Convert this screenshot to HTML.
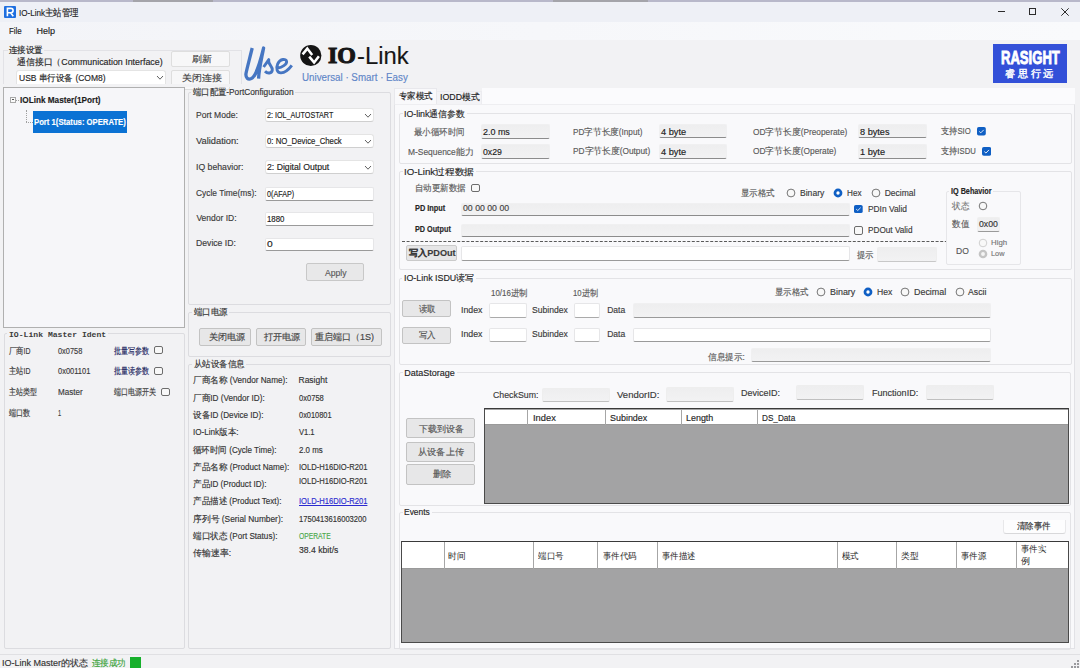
<!DOCTYPE html><html><head><meta charset="utf-8"><style>
html,body{margin:0;padding:0;width:1080px;height:668px;overflow:hidden;background:#f2f2f4;font-family:'Liberation Sans', sans-serif;}
.a{position:absolute;}
.t{position:absolute;white-space:nowrap;font-weight:500;-webkit-text-stroke:0.15px currentColor;}
</style></head><body>
<div class="a" style="left:0px;top:0px;width:1080.00px;height:22.00px;background:#eef0f6;"></div>
<div class="a" style="left:0px;top:0px;width:1080.00px;height:1.50px;background:#b8b8ca;"></div>
<div class="a" style="left:133px;top:0px;width:80.00px;height:1.50px;background:#a4a4aa;"></div>
<div class="a" style="left:553px;top:0px;width:95.00px;height:1.50px;background:#a4a4aa;"></div>
<div class="a" style="left:0px;top:22px;width:1080.00px;height:18.00px;background:linear-gradient(90deg,#f3f4f8,#f9fafc);"></div>
<svg class="a" style="left:4px;top:6px" width="12" height="12"><rect width="12" height="12" rx="1" fill="#1f6fe0"/><path d="M3.4 10.2 V2.4 H6.8 Q9.1 2.4 9.1 4.6 Q9.1 6.7 6.8 6.7 H3.4 M6.6 6.7 L9.3 10.2" fill="none" stroke="#fff" stroke-width="1.6"/></svg>
<div class="t" style="left:18.70px;top:5.50px;color:#1c1c1c;font-family:'Liberation Sans', sans-serif;font-size:9.5px;line-height:14px;transform:scaleX(0.8481);transform-origin:0 50%;">IO-Link主站管理</div>
<div class="a" style="left:998px;top:11px;width:7.00px;height:1.00px;background:#2c2c2c;"></div>
<div class="a" style="left:1029px;top:8px;width:7.00px;height:7.00px;border:1px solid #2c2c2c;box-sizing:border-box;"></div>
<svg class="a" style="left:1060.5px;top:7.5px" width="8" height="8"><path d="M0.3 0.3 L7.7 7.7 M7.7 0.3 L0.3 7.7" stroke="#2c2c2c" stroke-width="1"/></svg>
<div class="t" style="left:9.20px;top:24.20px;color:#1c1c1c;font-family:'Liberation Sans', sans-serif;font-size:9px;line-height:14px;transform:scaleX(0.8818);transform-origin:0 50%;">File</div>
<div class="t" style="left:36.40px;top:24.20px;color:#1c1c1c;font-family:'Liberation Sans', sans-serif;font-size:9px;line-height:14px;">Help</div>
<div class="a" style="left:3px;top:50px;width:239.00px;height:34.00px;border:1px solid #e2e2e6;border-bottom:none;box-sizing:border-box;"></div>
<div class="a" style="left:8px;top:46px;width:36.00px;height:8.00px;background:#f2f2f4;"></div>
<div class="t" style="left:8.90px;top:43.40px;color:#262626;font-family:'Liberation Sans', sans-serif;font-size:9px;line-height:14px;transform:scaleX(0.9417);transform-origin:0 50%;">连接设置</div>
<div class="t" style="left:17.20px;top:55.00px;color:#262626;font-family:'Liberation Sans', sans-serif;font-size:9px;line-height:14px;transform:scaleX(0.9835);transform-origin:0 50%;">通信接口（Communication Interface)</div>
<div class="a" style="left:16.3px;top:69.7px;width:150.00px;height:20.30px;background:#ffffff;border:1px solid #e4e4e4;border-bottom:1px solid #cfcfcf;border-radius:3px;box-sizing:border-box;"></div>
<svg class="a" style="left:155.8px;top:75.4px" width="8" height="5"><path d="M1 1 L4.00 4.20 L7.00 1" fill="none" stroke="#606060" stroke-width="1"/></svg>
<div class="t" style="left:18.90px;top:71.30px;color:#262626;font-family:'Liberation Sans', sans-serif;font-size:9px;line-height:14px;transform:scaleX(0.9474);transform-origin:0 50%;">USB 串行设备 (COM8)</div>
<div class="a" style="left:171.3px;top:50.7px;width:59.00px;height:16.60px;background:#f7f7f8;border:1px solid #dedede;border-radius:2px;box-sizing:border-box;"></div>
<div class="t" style="left:192.20px;top:51.50px;color:#444;font-family:'Liberation Sans', sans-serif;font-size:9px;line-height:14px;transform:scaleX(1.1000);transform-origin:0 50%;">刷新</div>
<div class="a" style="left:171.3px;top:70.2px;width:59.00px;height:19.80px;background:#f7f7f8;border:1px solid #dedede;border-radius:2px;box-sizing:border-box;"></div>
<div class="t" style="left:182.20px;top:70.70px;color:#444;font-family:'Liberation Sans', sans-serif;font-size:9px;line-height:14px;transform:scaleX(1.1056);transform-origin:0 50%;">关闭连接</div>
<div class="a" style="left:0px;top:84px;width:242.00px;height:3.00px;background:#f2f2f4;"></div>
<svg class="a" style="left:240px;top:42px" width="56" height="42"><g fill="none" stroke="#4676c2" stroke-linecap="butt" stroke-linejoin="round"><path d="M12.2 6 C9.8 16 6.8 27 6 31.5 C5.4 35.8 8 38 11.3 36.6 C16.5 34 20.2 20 23.6 6 C21.8 16 18.8 28 18.6 36.6" stroke-width="3.3"/><path d="M23.6 25 L28.8 17.6 C27.4 22 32.8 24 32.3 28 C31.8 31.6 27.6 32 25 29.3" stroke-width="2.9"/><path d="M37.4 26.2 C42 25.2 47 22.6 46.6 19.4 C46.1 16.4 40.2 16.6 37.7 21.8 C35.5 26.8 37.3 31 41 30.9 C45 30.7 49 27.2 51.8 23.4" stroke-width="2.9"/></g></svg>
<svg class="a" style="left:300px;top:44px" width="22" height="23"><circle cx="10.8" cy="11.5" r="10.6" fill="#141414"/><path d="M2.6 10.4 L7.3 4.6 L12.2 10.9" fill="none" stroke="#fff" stroke-width="2.5" stroke-linejoin="miter"/><path d="M9.2 12.6 L14.1 18.4 L18.9 12.2" fill="none" stroke="#fff" stroke-width="2.5" stroke-linejoin="miter"/></svg>
<div class="t" style="left:328.20px;top:43.00px;color:#161616;font-family:'Liberation Serif', serif;font-size:23px;line-height:26px;font-weight:bold;-webkit-text-stroke:1.1px #161616;transform:scaleX(1.0393);transform-origin:0 50%;">IO</div>
<div class="t" style="left:356.70px;top:43.00px;color:#161616;font-family:'Liberation Sans', sans-serif;font-size:23px;line-height:26px;transform:scaleX(1.0349);transform-origin:0 50%;">-Link</div>
<div class="t" style="left:301.70px;top:71.20px;color:#5f86c8;font-family:'Liberation Sans', sans-serif;font-size:10px;line-height:14px;transform:scaleX(0.9764);transform-origin:0 50%;">Universal · Smart · Easy</div>
<div class="a" style="left:992.9px;top:44px;width:74.10px;height:38.60px;background:#3350d8;"></div>
<div class="t" style="left:1000.60px;top:47.80px;color:#fff;font-family:'Liberation Sans', sans-serif;font-size:19px;line-height:20px;font-weight:bold;-webkit-text-stroke:0.9px #fff;transform:scaleX(0.6877);transform-origin:0 50%;">RASIGHT</div>
<div class="t" style="left:1004.70px;top:67.80px;color:#fff;font-family:'Liberation Sans', sans-serif;font-size:9.5px;line-height:12px;-webkit-text-stroke:0.4px #fff;transform:scaleX(1.0121);transform-origin:0 50%;">睿 思 行 远</div>
<div class="a" style="left:3px;top:87px;width:182.00px;height:241.00px;background:#f6f6f9;border:1px solid #b0b0b0;box-sizing:border-box;"></div>
<div class="a" style="left:10px;top:96.6px;width:6.20px;height:6.40px;border:1px solid #a8a8a8;background:#fafafa;box-sizing:border-box;"></div>
<div class="a" style="left:11.8px;top:99.4px;width:2.60px;height:0.90px;background:#555;"></div>
<div class="a" style="left:16.2px;top:99.6px;width:2.80px;height:0.80px;border-top:1px dotted #a0a0a0;"></div>
<div class="t" style="left:20.30px;top:92.50px;color:#1c1c1c;font-family:'Liberation Sans', sans-serif;font-size:9px;line-height:14px;font-weight:bold;transform:scaleX(0.9106);transform-origin:0 50%;">IOLink Master(1Port)</div>
<div class="a" style="left:26px;top:110.4px;width:1.00px;height:11.90px;border-left:1px dotted #a0a0a0;"></div>
<div class="a" style="left:26px;top:122px;width:6.75px;height:1.00px;border-top:1px dotted #a0a0a0;"></div>
<div class="a" style="left:32.75px;top:110.75px;width:94.50px;height:22.15px;background:#0b72d4;"></div>
<div class="t" style="left:34.10px;top:115.00px;color:#fff;font-family:'Liberation Sans', sans-serif;font-size:9px;line-height:14px;font-weight:bold;transform:scaleX(0.8552);transform-origin:0 50%;">Port 1(Status: OPERATE)</div>
<div class="a" style="left:4.2px;top:333.3px;width:180.80px;height:316.20px;border:1px solid #dcdce0;box-sizing:border-box;border-radius:2px;"></div>
<div class="a" style="left:7.199999999999999px;top:332.5px;width:100.60px;height:4.00px;background:#f2f2f4;"></div>
<div class="t" style="left:8.90px;top:327.50px;color:#3c3c3c;font-family:'Liberation Mono', monospace;font-size:8px;line-height:14px;font-weight:bold;-webkit-text-stroke:0;transform:scaleX(1.0123);transform-origin:0 50%;">IO-Link Master Ident</div>
<div class="t" style="left:8.90px;top:343.70px;color:#3a3a3a;font-family:'Liberation Sans', sans-serif;font-size:8.5px;line-height:14px;transform:scaleX(0.8075);transform-origin:0 50%;">厂商ID</div>
<div class="t" style="left:57.70px;top:343.70px;color:#3a3a3a;font-family:'Liberation Sans', sans-serif;font-size:8.5px;line-height:14px;transform:scaleX(0.8713);transform-origin:0 50%;">0x0758</div>
<div class="t" style="left:113.90px;top:343.70px;color:#1a1f5e;font-family:'Liberation Sans', sans-serif;font-size:8.5px;line-height:14px;transform:scaleX(0.7822);transform-origin:0 50%;">批量写参数</div>
<div class="a" style="left:154.2px;top:345.7px;width:9.10px;height:8.80px;border:1px solid #6c6c6c;border-radius:2px;box-sizing:border-box;background:#f8f8f8;"></div>
<div class="t" style="left:8.90px;top:364.20px;color:#3a3a3a;font-family:'Liberation Sans', sans-serif;font-size:8.5px;line-height:14px;transform:scaleX(0.8075);transform-origin:0 50%;">主站ID</div>
<div class="t" style="left:57.70px;top:364.20px;color:#3a3a3a;font-family:'Liberation Sans', sans-serif;font-size:8.5px;line-height:14px;transform:scaleX(0.8797);transform-origin:0 50%;">0x001101</div>
<div class="t" style="left:113.90px;top:364.20px;color:#1a1f5e;font-family:'Liberation Sans', sans-serif;font-size:8.5px;line-height:14px;transform:scaleX(0.7822);transform-origin:0 50%;">批量读参数</div>
<div class="a" style="left:154.2px;top:366.7px;width:9.10px;height:8.30px;border:1px solid #6c6c6c;border-radius:2px;box-sizing:border-box;background:#f8f8f8;"></div>
<div class="t" style="left:8.90px;top:385.30px;color:#3a3a3a;font-family:'Liberation Sans', sans-serif;font-size:8.5px;line-height:14px;transform:scaleX(0.7806);transform-origin:0 50%;">主站类型</div>
<div class="t" style="left:57.70px;top:385.30px;color:#3a3a3a;font-family:'Liberation Sans', sans-serif;font-size:8.5px;line-height:14px;transform:scaleX(0.9467);transform-origin:0 50%;">Master</div>
<div class="t" style="left:113.90px;top:385.30px;color:#3a3a3a;font-family:'Liberation Sans', sans-serif;font-size:8.5px;line-height:14px;transform:scaleX(0.7815);transform-origin:0 50%;">端口电源开关</div>
<div class="a" style="left:161.3px;top:387.5px;width:9.00px;height:8.20px;border:1px solid #6c6c6c;border-radius:2px;box-sizing:border-box;background:#f8f8f8;"></div>
<div class="t" style="left:8.90px;top:405.80px;color:#3a3a3a;font-family:'Liberation Sans', sans-serif;font-size:8.5px;line-height:14px;transform:scaleX(0.7926);transform-origin:0 50%;">端口数</div>
<div class="t" style="left:57.70px;top:405.80px;color:#3a3a3a;font-family:'Liberation Sans', sans-serif;font-size:8.5px;line-height:14px;transform:scaleX(0.6548);transform-origin:0 50%;">1</div>
<div class="a" style="left:188px;top:92px;width:202.50px;height:212.50px;border:1px solid #dcdce0;box-sizing:border-box;border-radius:2px;"></div>
<div class="a" style="left:191.3px;top:89.8px;width:104.00px;height:4.00px;background:#f2f2f4;"></div>
<div class="t" style="left:193.00px;top:84.80px;color:#333;font-family:'Liberation Sans', sans-serif;font-size:9px;line-height:14px;transform:scaleX(0.9225);transform-origin:0 50%;">端口配置-PortConfiguration</div>
<div class="t" style="left:196.40px;top:108.00px;color:#3a3a3a;font-family:'Liberation Sans', sans-serif;font-size:8.5px;line-height:14px;transform:scaleX(1.0053);transform-origin:0 50%;">Port Mode:</div>
<div class="t" style="left:196.40px;top:133.70px;color:#3a3a3a;font-family:'Liberation Sans', sans-serif;font-size:8.5px;line-height:14px;transform:scaleX(1.0927);transform-origin:0 50%;">Validation:</div>
<div class="t" style="left:196.40px;top:159.70px;color:#3a3a3a;font-family:'Liberation Sans', sans-serif;font-size:8.5px;line-height:14px;transform:scaleX(1.0213);transform-origin:0 50%;">IQ behavior:</div>
<div class="t" style="left:196.40px;top:185.60px;color:#3a3a3a;font-family:'Liberation Sans', sans-serif;font-size:8.5px;line-height:14px;transform:scaleX(0.9871);transform-origin:0 50%;">Cycle Time(ms):</div>
<div class="t" style="left:196.40px;top:211.00px;color:#3a3a3a;font-family:'Liberation Sans', sans-serif;font-size:8.5px;line-height:14px;">Vendor ID:</div>
<div class="t" style="left:196.40px;top:236.30px;color:#3a3a3a;font-family:'Liberation Sans', sans-serif;font-size:8.5px;line-height:14px;transform:scaleX(1.0174);transform-origin:0 50%;">Device ID:</div>
<div class="a" style="left:265.3px;top:107.8px;width:109.20px;height:14.40px;background:#ffffff;border:1px solid #e4e4e4;border-bottom:1px solid #cfcfcf;border-radius:3px;box-sizing:border-box;"></div>
<svg class="a" style="left:364.0px;top:112.7px" width="8" height="5"><path d="M1 1 L4.00 4.20 L7.00 1" fill="none" stroke="#606060" stroke-width="1"/></svg>
<div class="t" style="left:267.20px;top:108.00px;color:#222;font-family:'Liberation Sans', sans-serif;font-size:8.5px;line-height:14px;transform:scaleX(0.8454);transform-origin:0 50%;">2: IOL_AUTOSTART</div>
<div class="a" style="left:265.3px;top:134.3px;width:109.20px;height:13.80px;background:#ffffff;border:1px solid #e4e4e4;border-bottom:1px solid #cfcfcf;border-radius:3px;box-sizing:border-box;"></div>
<svg class="a" style="left:364.0px;top:138.9px" width="8" height="5"><path d="M1 1 L4.00 4.20 L7.00 1" fill="none" stroke="#606060" stroke-width="1"/></svg>
<div class="t" style="left:267.20px;top:134.00px;color:#222;font-family:'Liberation Sans', sans-serif;font-size:8.5px;line-height:14px;transform:scaleX(0.9139);transform-origin:0 50%;">0: NO_Device_Check</div>
<div class="a" style="left:265.3px;top:160.2px;width:109.20px;height:14.20px;background:#ffffff;border:1px solid #e4e4e4;border-bottom:1px solid #cfcfcf;border-radius:3px;box-sizing:border-box;"></div>
<svg class="a" style="left:364.0px;top:165.0px" width="8" height="5"><path d="M1 1 L4.00 4.20 L7.00 1" fill="none" stroke="#606060" stroke-width="1"/></svg>
<div class="t" style="left:267.20px;top:160.30px;color:#222;font-family:'Liberation Sans', sans-serif;font-size:8.5px;line-height:14px;transform:scaleX(1.0205);transform-origin:0 50%;">2: Digital Output</div>
<div class="a" style="left:265.3px;top:187.4px;width:109.20px;height:13.90px;background:#ffffff;border:1px solid #e6e6e8;border-bottom:1px solid #9a9a9a;border-radius:2px;box-sizing:border-box;"></div>
<div class="t" style="left:266.60px;top:186.50px;color:#222;font-family:'Liberation Sans', sans-serif;font-size:8.5px;line-height:14px;transform:scaleX(0.8436);transform-origin:0 50%;">0(AFAP)</div>
<div class="a" style="left:265.3px;top:212.4px;width:109.20px;height:13.90px;background:#ffffff;border:1px solid #e6e6e8;border-bottom:1px solid #9a9a9a;border-radius:2px;box-sizing:border-box;"></div>
<div class="t" style="left:266.60px;top:211.70px;color:#222;font-family:'Liberation Sans', sans-serif;font-size:8.5px;line-height:14px;transform:scaleX(0.9249);transform-origin:0 50%;">1880</div>
<div class="a" style="left:265.3px;top:237.8px;width:109.20px;height:13.50px;background:#ffffff;border:1px solid #e6e6e8;border-bottom:1px solid #9a9a9a;border-radius:2px;box-sizing:border-box;"></div>
<div class="t" style="left:266.60px;top:237.40px;color:#222;font-family:'Liberation Sans', sans-serif;font-size:8.5px;line-height:14px;transform:scaleX(1.2040);transform-origin:0 50%;">0</div>
<div class="a" style="left:305.9px;top:262.9px;width:58.10px;height:18.30px;background:#e8e8e9;border:1px solid #c8c8c8;border-radius:2px;box-sizing:border-box;"></div>
<div class="t" style="left:325.30px;top:265.70px;color:#5a5a5a;font-family:'Liberation Sans', sans-serif;font-size:9px;line-height:14px;transform:scaleX(0.9593);transform-origin:0 50%;">Apply</div>
<div class="a" style="left:188px;top:312px;width:202.50px;height:45.00px;border:1px solid #dcdce0;box-sizing:border-box;border-radius:2px;"></div>
<div class="a" style="left:191.9px;top:310px;width:37.30px;height:4.00px;background:#f2f2f4;"></div>
<div class="t" style="left:193.60px;top:305.00px;color:#333;font-family:'Liberation Sans', sans-serif;font-size:9px;line-height:14px;transform:scaleX(0.9417);transform-origin:0 50%;">端口电源</div>
<div class="a" style="left:199.2px;top:327.5px;width:51.50px;height:18.00px;background:#e7e7e8;border:1px solid #c3c3c3;border-radius:2px;box-sizing:border-box;"></div>
<div class="t" style="left:208.50px;top:329.60px;color:#444;font-family:'Liberation Sans', sans-serif;font-size:9px;line-height:14px;transform:scaleX(1.0139);transform-origin:0 50%;">关闭电源</div>
<div class="a" style="left:255.5px;top:327.5px;width:50.70px;height:18.00px;background:#e7e7e8;border:1px solid #c3c3c3;border-radius:2px;box-sizing:border-box;"></div>
<div class="t" style="left:263.50px;top:329.60px;color:#444;font-family:'Liberation Sans', sans-serif;font-size:9px;line-height:14px;transform:scaleX(1.0167);transform-origin:0 50%;">打开电源</div>
<div class="a" style="left:310.5px;top:327.5px;width:71.40px;height:18.00px;background:#e7e7e8;border:1px solid #c3c3c3;border-radius:2px;box-sizing:border-box;"></div>
<div class="t" style="left:315.00px;top:329.60px;color:#444;font-family:'Liberation Sans', sans-serif;font-size:9px;line-height:14px;">重启端口（1S)</div>
<div class="a" style="left:188px;top:364.2px;width:202.50px;height:284.80px;border:1px solid #dcdce0;box-sizing:border-box;border-radius:2px;"></div>
<div class="a" style="left:191.9px;top:362.2px;width:54.30px;height:4.00px;background:#f2f2f4;"></div>
<div class="t" style="left:193.60px;top:357.20px;color:#333;font-family:'Liberation Sans', sans-serif;font-size:9px;line-height:14px;transform:scaleX(0.9426);transform-origin:0 50%;">从站设备信息</div>
<div class="t" style="left:193.40px;top:373.20px;color:#333;font-family:'Liberation Sans', sans-serif;font-size:8.5px;line-height:14px;transform:scaleX(0.9606);transform-origin:0 50%;">厂商名称 (Vendor Name):</div>
<div class="t" style="left:298.50px;top:373.20px;color:#333;font-family:'Liberation Sans', sans-serif;font-size:8.5px;line-height:14px;">Rasight</div>
<div class="t" style="left:193.40px;top:390.70px;color:#333;font-family:'Liberation Sans', sans-serif;font-size:8.5px;line-height:14px;transform:scaleX(0.9600);transform-origin:0 50%;">厂商ID (Vendor ID):</div>
<div class="t" style="left:298.50px;top:390.70px;color:#333;font-family:'Liberation Sans', sans-serif;font-size:8.5px;line-height:14px;transform:scaleX(0.8892);transform-origin:0 50%;">0x0758</div>
<div class="t" style="left:193.40px;top:408.00px;color:#333;font-family:'Liberation Sans', sans-serif;font-size:8.5px;line-height:14px;transform:scaleX(0.9548);transform-origin:0 50%;">设备ID (Device ID):</div>
<div class="t" style="left:298.50px;top:408.00px;color:#333;font-family:'Liberation Sans', sans-serif;font-size:8.5px;line-height:14px;transform:scaleX(0.8730);transform-origin:0 50%;">0x010801</div>
<div class="t" style="left:193.40px;top:424.70px;color:#333;font-family:'Liberation Sans', sans-serif;font-size:8.5px;line-height:14px;transform:scaleX(0.9547);transform-origin:0 50%;">IO-Link版本:</div>
<div class="t" style="left:298.50px;top:424.70px;color:#333;font-family:'Liberation Sans', sans-serif;font-size:8.5px;line-height:14px;transform:scaleX(0.8914);transform-origin:0 50%;">V1.1</div>
<div class="t" style="left:193.40px;top:442.70px;color:#333;font-family:'Liberation Sans', sans-serif;font-size:8.5px;line-height:14px;transform:scaleX(0.9443);transform-origin:0 50%;">循环时间 (Cycle Time):</div>
<div class="t" style="left:298.50px;top:442.70px;color:#333;font-family:'Liberation Sans', sans-serif;font-size:8.5px;line-height:14px;transform:scaleX(0.9288);transform-origin:0 50%;">2.0 ms</div>
<div class="t" style="left:193.40px;top:459.90px;color:#333;font-family:'Liberation Sans', sans-serif;font-size:8.5px;line-height:14px;transform:scaleX(0.9561);transform-origin:0 50%;">产品名称 (Product Name):</div>
<div class="t" style="left:298.50px;top:459.90px;color:#333;font-family:'Liberation Sans', sans-serif;font-size:8.5px;line-height:14px;transform:scaleX(0.8938);transform-origin:0 50%;">IOLD-H16DIO-R201</div>
<div class="t" style="left:193.40px;top:477.30px;color:#333;font-family:'Liberation Sans', sans-serif;font-size:8.5px;line-height:14px;transform:scaleX(0.9540);transform-origin:0 50%;">产品ID (Product ID):</div>
<div class="t" style="left:298.50px;top:474.00px;color:#333;font-family:'Liberation Sans', sans-serif;font-size:8.5px;line-height:14px;transform:scaleX(0.8938);transform-origin:0 50%;">IOLD-H16DIO-R201</div>
<div class="t" style="left:193.40px;top:494.40px;color:#333;font-family:'Liberation Sans', sans-serif;font-size:8.5px;line-height:14px;transform:scaleX(0.9467);transform-origin:0 50%;">产品描述 (Product Text):</div>
<div class="t" style="left:298.50px;top:494.40px;color:#2a2ad0;font-family:'Liberation Sans', sans-serif;font-size:8.5px;line-height:14px;transform:scaleX(0.8938);transform-origin:0 50%;"><u>IOLD-H16DIO-R201</u></div>
<div class="t" style="left:193.40px;top:512.00px;color:#333;font-family:'Liberation Sans', sans-serif;font-size:8.5px;line-height:14px;transform:scaleX(0.9813);transform-origin:0 50%;">序列号 (Serial Number):</div>
<div class="t" style="left:298.50px;top:512.00px;color:#333;font-family:'Liberation Sans', sans-serif;font-size:8.5px;line-height:14px;transform:scaleX(0.8924);transform-origin:0 50%;">1750413616003200</div>
<div class="t" style="left:193.40px;top:529.30px;color:#333;font-family:'Liberation Sans', sans-serif;font-size:8.5px;line-height:14px;transform:scaleX(0.9543);transform-origin:0 50%;">端口状态 (Port Status):</div>
<div class="t" style="left:298.50px;top:529.30px;color:#4aa84a;font-family:'Liberation Sans', sans-serif;font-size:8.5px;line-height:14px;transform:scaleX(0.7925);transform-origin:0 50%;">OPERATE</div>
<div class="t" style="left:193.40px;top:545.80px;color:#333;font-family:'Liberation Sans', sans-serif;font-size:8.5px;line-height:14px;transform:scaleX(0.9902);transform-origin:0 50%;">传输速率:</div>
<div class="t" style="left:298.50px;top:543.30px;color:#333;font-family:'Liberation Sans', sans-serif;font-size:8.5px;line-height:14px;transform:scaleX(1.0168);transform-origin:0 50%;">38.4 kbit/s</div>
<div class="a" style="left:393.7px;top:103.7px;width:681.30px;height:545.30px;background:#f9f9fb;border:1px solid #e2e2e6;border-top-color:#eeeef1;box-sizing:border-box;"></div>
<div class="a" style="left:482px;top:88px;width:593.00px;height:15.70px;background:#fbfbfd;"></div>
<div class="a" style="left:393.7px;top:88.2px;width:43.20px;height:16.30px;background:#f9f9fb;border:1px solid #e8e8ec;border-bottom:none;box-sizing:border-box;"></div>
<div class="t" style="left:398.90px;top:88.70px;color:#1c1c1c;font-family:'Liberation Sans', sans-serif;font-size:9px;line-height:14px;transform:scaleX(0.9417);transform-origin:0 50%;">专家模式</div>
<div class="a" style="left:436.9px;top:90.7px;width:44.80px;height:13.00px;background:#f3f3f6;border:1px solid #ececf0;border-left:none;border-bottom:none;box-sizing:border-box;"></div>
<div class="t" style="left:440.20px;top:90.00px;color:#1c1c1c;font-family:'Liberation Sans', sans-serif;font-size:9px;line-height:14px;transform:scaleX(0.9778);transform-origin:0 50%;">IODD模式</div>
<div class="a" style="left:398.5px;top:113.2px;width:673.00px;height:51.10px;border:1px solid #e3e3e6;box-sizing:border-box;border-radius:2px;"></div>
<div class="a" style="left:402.7px;top:112px;width:64.00px;height:4.00px;background:#f9f9fb;"></div>
<div class="t" style="left:404.40px;top:107.00px;color:#262626;font-family:'Liberation Sans', sans-serif;font-size:9px;line-height:14px;transform:scaleX(0.9772);transform-origin:0 50%;">IO-link通信参数</div>
<div class="t" style="left:414.40px;top:124.80px;color:#5a5a5a;font-family:'Liberation Sans', sans-serif;font-size:8.5px;line-height:14px;transform:scaleX(0.9426);transform-origin:0 50%;">最小循环时间</div>
<div class="t" style="left:407.70px;top:144.50px;color:#5a5a5a;font-family:'Liberation Sans', sans-serif;font-size:8.5px;line-height:14px;transform:scaleX(0.9909);transform-origin:0 50%;">M-Sequence能力</div>
<div class="a" style="left:481.3px;top:124px;width:68.40px;height:14.50px;background:linear-gradient(#eeeeef,#f2f2f3);border:1px solid #f0f0f1;border-bottom:1px solid #8c8c8c;border-radius:2px;box-sizing:border-box;"></div>
<div class="t" style="left:482.70px;top:124.80px;color:#1c1c1c;font-family:'Liberation Sans', sans-serif;font-size:9px;line-height:14px;transform:scaleX(0.9920);transform-origin:0 50%;">2.0 ms</div>
<div class="a" style="left:481.3px;top:144px;width:68.40px;height:14.70px;background:linear-gradient(#eeeeef,#f2f2f3);border:1px solid #f0f0f1;border-bottom:1px solid #8c8c8c;border-radius:2px;box-sizing:border-box;"></div>
<div class="t" style="left:482.70px;top:144.50px;color:#1c1c1c;font-family:'Liberation Sans', sans-serif;font-size:9px;line-height:14px;transform:scaleX(0.9677);transform-origin:0 50%;">0x29</div>
<div class="t" style="left:573.40px;top:124.80px;color:#5a5a5a;font-family:'Liberation Sans', sans-serif;font-size:8.5px;line-height:14px;transform:scaleX(0.9589);transform-origin:0 50%;">PD字节长度(Input)</div>
<div class="t" style="left:573.40px;top:144.30px;color:#5a5a5a;font-family:'Liberation Sans', sans-serif;font-size:8.5px;line-height:14px;transform:scaleX(0.9772);transform-origin:0 50%;">PD字节长度(Output)</div>
<div class="a" style="left:659.2px;top:123.5px;width:68.30px;height:14.70px;background:linear-gradient(#eeeeef,#f2f2f3);border:1px solid #f0f0f1;border-bottom:1px solid #8c8c8c;border-radius:2px;box-sizing:border-box;"></div>
<div class="t" style="left:660.50px;top:124.50px;color:#1c1c1c;font-family:'Liberation Sans', sans-serif;font-size:9px;line-height:14px;transform:scaleX(1.0232);transform-origin:0 50%;">4 byte</div>
<div class="a" style="left:659.2px;top:143.5px;width:68.30px;height:15.50px;background:linear-gradient(#eeeeef,#f2f2f3);border:1px solid #f0f0f1;border-bottom:1px solid #8c8c8c;border-radius:2px;box-sizing:border-box;"></div>
<div class="t" style="left:660.50px;top:144.50px;color:#1c1c1c;font-family:'Liberation Sans', sans-serif;font-size:9px;line-height:14px;transform:scaleX(1.0232);transform-origin:0 50%;">4 byte</div>
<div class="t" style="left:752.70px;top:124.80px;color:#5a5a5a;font-family:'Liberation Sans', sans-serif;font-size:8.5px;line-height:14px;transform:scaleX(0.9775);transform-origin:0 50%;">OD字节长度(Preoperate)</div>
<div class="t" style="left:752.70px;top:144.30px;color:#5a5a5a;font-family:'Liberation Sans', sans-serif;font-size:8.5px;line-height:14px;transform:scaleX(0.9797);transform-origin:0 50%;">OD字节长度(Operate)</div>
<div class="a" style="left:858.3px;top:123.5px;width:68.70px;height:14.70px;background:linear-gradient(#eeeeef,#f2f2f3);border:1px solid #f0f0f1;border-bottom:1px solid #8c8c8c;border-radius:2px;box-sizing:border-box;"></div>
<div class="t" style="left:860.00px;top:124.50px;color:#1c1c1c;font-family:'Liberation Sans', sans-serif;font-size:9px;line-height:14px;transform:scaleX(1.0161);transform-origin:0 50%;">8 bytes</div>
<div class="a" style="left:858.3px;top:143.5px;width:68.70px;height:15.50px;background:linear-gradient(#eeeeef,#f2f2f3);border:1px solid #f0f0f1;border-bottom:1px solid #8c8c8c;border-radius:2px;box-sizing:border-box;"></div>
<div class="t" style="left:860.00px;top:144.50px;color:#1c1c1c;font-family:'Liberation Sans', sans-serif;font-size:9px;line-height:14px;transform:scaleX(1.0191);transform-origin:0 50%;">1 byte</div>
<div class="t" style="left:940.50px;top:124.30px;color:#5a5a5a;font-family:'Liberation Sans', sans-serif;font-size:8.5px;line-height:14px;transform:scaleX(0.9125);transform-origin:0 50%;">支持SIO</div>
<div class="t" style="left:940.50px;top:144.30px;color:#5a5a5a;font-family:'Liberation Sans', sans-serif;font-size:8.5px;line-height:14px;transform:scaleX(0.9083);transform-origin:0 50%;">支持ISDU</div>
<svg class="a" style="left:977px;top:127px" width="8.8" height="8.5" viewBox="0 0 9 9" preserveAspectRatio="none"><rect x="0" y="0" width="9" height="9" rx="1.8" fill="#0f5fc4"/><path d="M2.3 4.7 L3.9 6.2 L6.9 3.0" fill="none" stroke="#fff" stroke-width="0.9"/></svg>
<svg class="a" style="left:981.7px;top:147px" width="9.1" height="8.8" viewBox="0 0 9 9" preserveAspectRatio="none"><rect x="0" y="0" width="9" height="9" rx="1.8" fill="#0f5fc4"/><path d="M2.3 4.7 L3.9 6.2 L6.9 3.0" fill="none" stroke="#fff" stroke-width="0.9"/></svg>
<div class="a" style="left:398.5px;top:171.3px;width:673.00px;height:98.60px;border:1px solid #e3e3e6;box-sizing:border-box;border-radius:2px;"></div>
<div class="a" style="left:402.7px;top:169.5px;width:73.30px;height:4.00px;background:#f9f9fb;"></div>
<div class="t" style="left:404.40px;top:164.50px;color:#262626;font-family:'Liberation Sans', sans-serif;font-size:9px;line-height:14px;transform:scaleX(1.0751);transform-origin:0 50%;">IO-Link过程数据</div>
<div class="t" style="left:414.50px;top:180.80px;color:#5a5a5a;font-family:'Liberation Sans', sans-serif;font-size:8.5px;line-height:14px;transform:scaleX(0.9407);transform-origin:0 50%;">自动更新数据</div>
<div class="a" style="left:471.4px;top:183.7px;width:8.60px;height:8.20px;border:1px solid #6c6c6c;border-radius:2px;box-sizing:border-box;background:#f8f8f8;"></div>
<div class="t" style="left:741.20px;top:186.00px;color:#5a5a5a;font-family:'Liberation Sans', sans-serif;font-size:8.5px;line-height:14px;transform:scaleX(0.9417);transform-origin:0 50%;">显示格式</div>
<svg class="a" style="left:784.90px;top:186.60px" width="12" height="12"><circle cx="6" cy="6" r="3.90" fill="#f8f8f8" stroke="#767676" stroke-width="1"/></svg>
<div class="t" style="left:799.50px;top:186.00px;color:#3a3a3a;font-family:'Liberation Sans', sans-serif;font-size:8.5px;line-height:14px;transform:scaleX(1.0086);transform-origin:0 50%;">Binary</div>
<svg class="a" style="left:832.10px;top:186.60px" width="12" height="12"><circle cx="6" cy="6" r="4.4" fill="#0f5fc4"/><circle cx="6" cy="6" r="1.67" fill="#fff"/></svg>
<div class="t" style="left:846.70px;top:186.00px;color:#3a3a3a;font-family:'Liberation Sans', sans-serif;font-size:8.5px;line-height:14px;transform:scaleX(0.9587);transform-origin:0 50%;">Hex</div>
<svg class="a" style="left:869.70px;top:186.60px" width="12" height="12"><circle cx="6" cy="6" r="3.90" fill="#f8f8f8" stroke="#767676" stroke-width="1"/></svg>
<div class="t" style="left:884.70px;top:186.00px;color:#3a3a3a;font-family:'Liberation Sans', sans-serif;font-size:8.5px;line-height:14px;">Decimal</div>
<div class="t" style="left:414.50px;top:201.20px;color:#262626;font-family:'Liberation Sans', sans-serif;font-size:8.5px;line-height:14px;font-weight:bold;transform:scaleX(0.8669);transform-origin:0 50%;">PD Input</div>
<div class="t" style="left:414.50px;top:222.00px;color:#262626;font-family:'Liberation Sans', sans-serif;font-size:8.5px;line-height:14px;font-weight:bold;transform:scaleX(0.8517);transform-origin:0 50%;">PD Output</div>
<div class="a" style="left:461.2px;top:202.7px;width:388.80px;height:13.80px;background:linear-gradient(#eeeeef,#f2f2f3);border:1px solid #f0f0f1;border-bottom:1px solid #8c8c8c;border-radius:2px;box-sizing:border-box;"></div>
<div class="t" style="left:462.70px;top:200.80px;color:#444;font-family:'Liberation Sans', sans-serif;font-size:9px;line-height:14px;transform:scaleX(0.9696);transform-origin:0 50%;">00 00 00 00</div>
<div class="a" style="left:461.2px;top:223.7px;width:388.80px;height:13.70px;background:linear-gradient(#eeeeef,#f2f2f3);border:1px solid #f0f0f1;border-bottom:1px solid #8c8c8c;border-radius:2px;box-sizing:border-box;"></div>
<svg class="a" style="left:854.4px;top:205px" width="8.7" height="8.0" viewBox="0 0 9 9" preserveAspectRatio="none"><rect x="0" y="0" width="9" height="9" rx="1.8" fill="#0f5fc4"/><path d="M2.3 4.7 L3.9 6.2 L6.9 3.0" fill="none" stroke="#fff" stroke-width="0.9"/></svg>
<div class="t" style="left:867.70px;top:201.70px;color:#3a3a3a;font-family:'Liberation Sans', sans-serif;font-size:8.5px;line-height:14px;transform:scaleX(0.9840);transform-origin:0 50%;">PDIn Valid</div>
<div class="a" style="left:854.4px;top:226.3px;width:8.70px;height:8.30px;border:1px solid #6c6c6c;border-radius:2px;box-sizing:border-box;background:#f8f8f8;"></div>
<div class="t" style="left:867.70px;top:223.00px;color:#3a3a3a;font-family:'Liberation Sans', sans-serif;font-size:8.5px;line-height:14px;transform:scaleX(0.9644);transform-origin:0 50%;">PDOut Valid</div>
<svg class="a" style="left:402px;top:240px" width="544" height="2"><line x1="0" y1="1.5" x2="544" y2="1.5" stroke="#5a5a5a" stroke-width="1" stroke-dasharray="3 1.6"/></svg>
<div class="a" style="left:406.2px;top:245.4px;width:50.50px;height:15.70px;background:#e6e6e7;border:1px solid #cacaca;border-radius:2px;box-sizing:border-box;"></div>
<div class="t" style="left:408.70px;top:246.20px;color:#3a3a3a;font-family:'Liberation Sans', sans-serif;font-size:9px;line-height:14px;font-weight:bold;transform:scaleX(1.0130);transform-origin:0 50%;">写入PDOut</div>
<div class="a" style="left:461.2px;top:246px;width:388.80px;height:15.10px;background:#ffffff;border:1px solid #e6e6e8;border-bottom:1px solid #9a9a9a;border-radius:2px;box-sizing:border-box;"></div>
<div class="t" style="left:856.60px;top:248.00px;color:#5a5a5a;font-family:'Liberation Sans', sans-serif;font-size:8.5px;line-height:14px;transform:scaleX(0.9278);transform-origin:0 50%;">提示</div>
<div class="a" style="left:876.7px;top:246.5px;width:60.70px;height:15.00px;background:linear-gradient(#eeeeef,#f2f2f3);border:1px solid #eeeeee;border-bottom:1px solid #c8c8c8;border-radius:2px;box-sizing:border-box;"></div>
<div class="a" style="left:945.8px;top:191.2px;width:75.30px;height:74.20px;border:1px solid #e6e6e9;box-sizing:border-box;border-radius:2px;"></div>
<div class="a" style="left:949.3px;top:189.2px;width:44.00px;height:4.00px;background:#f9f9fb;"></div>
<div class="t" style="left:951.00px;top:184.20px;color:#262626;font-family:'Liberation Sans', sans-serif;font-size:8.5px;line-height:14px;font-weight:bold;transform:scaleX(0.8508);transform-origin:0 50%;">IQ Behavior</div>
<div class="t" style="left:952.40px;top:199.10px;color:#777;font-family:'Liberation Sans', sans-serif;font-size:8.5px;line-height:14px;transform:scaleX(0.9500);transform-origin:0 50%;">状态</div>
<svg class="a" style="left:976.70px;top:200.10px" width="12" height="12"><circle cx="6" cy="6" r="3.80" fill="#f8f8f8" stroke="#767676" stroke-width="1"/></svg>
<div class="t" style="left:952.40px;top:217.20px;color:#5a5a5a;font-family:'Liberation Sans', sans-serif;font-size:8.5px;line-height:14px;transform:scaleX(0.9500);transform-origin:0 50%;">数值</div>
<div class="a" style="left:977.4px;top:216.6px;width:22.90px;height:15.80px;background:linear-gradient(#eeeeef,#f2f2f3);border:1px solid #f0f0f0;border-bottom:1px solid #9a9a9a;border-radius:2px;box-sizing:border-box;"></div>
<div class="t" style="left:978.90px;top:217.40px;color:#333;font-family:'Liberation Sans', sans-serif;font-size:9px;line-height:14px;transform:scaleX(0.9677);transform-origin:0 50%;">0x00</div>
<div class="t" style="left:955.50px;top:243.60px;color:#555;font-family:'Liberation Sans', sans-serif;font-size:9px;line-height:14px;transform:scaleX(0.9481);transform-origin:0 50%;">DO</div>
<svg class="a" style="left:976.70px;top:236.80px" width="12" height="12"><circle cx="6" cy="6" r="3.80" fill="#f8f8f8" stroke="#d0d0d0" stroke-width="1"/></svg>
<div class="t" style="left:991.40px;top:236.00px;color:#777;font-family:'Liberation Sans', sans-serif;font-size:8px;line-height:14px;transform:scaleX(0.9785);transform-origin:0 50%;">High</div>
<svg class="a" style="left:976.70px;top:247.90px" width="12" height="12"><circle cx="6" cy="6" r="4.3" fill="#c4c4c4"/><circle cx="6" cy="6" r="1.94" fill="#f4f4f4"/></svg>
<div class="t" style="left:991.40px;top:247.00px;color:#777;font-family:'Liberation Sans', sans-serif;font-size:8px;line-height:14px;transform:scaleX(0.9191);transform-origin:0 50%;">Low</div>
<div class="a" style="left:398.5px;top:277.7px;width:673.00px;height:87.50px;border:1px solid #e3e3e6;box-sizing:border-box;border-radius:2px;"></div>
<div class="a" style="left:402.3px;top:275.7px;width:73.40px;height:4.00px;background:#f9f9fb;"></div>
<div class="t" style="left:404.00px;top:270.70px;color:#262626;font-family:'Liberation Sans', sans-serif;font-size:9px;line-height:14px;transform:scaleX(0.9857);transform-origin:0 50%;">IO-Link ISDU读写</div>
<div class="t" style="left:490.70px;top:285.80px;color:#5a5a5a;font-family:'Liberation Sans', sans-serif;font-size:8.5px;line-height:14px;transform:scaleX(0.9317);transform-origin:0 50%;">10/16进制</div>
<div class="t" style="left:573.40px;top:285.80px;color:#5a5a5a;font-family:'Liberation Sans', sans-serif;font-size:8.5px;line-height:14px;transform:scaleX(0.9065);transform-origin:0 50%;">10进制</div>
<div class="a" style="left:402.4px;top:300.4px;width:48.20px;height:16.90px;background:#e7e7e8;border:1px solid #c3c3c3;border-radius:2px;box-sizing:border-box;"></div>
<div class="t" style="left:419.00px;top:302.00px;color:#555;font-family:'Liberation Sans', sans-serif;font-size:9px;line-height:14px;transform:scaleX(0.9333);transform-origin:0 50%;">读取</div>
<div class="a" style="left:402.4px;top:327px;width:48.20px;height:16.70px;background:#e7e7e8;border:1px solid #c3c3c3;border-radius:2px;box-sizing:border-box;"></div>
<div class="t" style="left:419.00px;top:328.10px;color:#555;font-family:'Liberation Sans', sans-serif;font-size:9px;line-height:14px;transform:scaleX(0.9333);transform-origin:0 50%;">写入</div>
<div class="t" style="left:460.70px;top:303.10px;color:#3a3a3a;font-family:'Liberation Sans', sans-serif;font-size:8.5px;line-height:14px;transform:scaleX(1.0290);transform-origin:0 50%;">Index</div>
<div class="a" style="left:489.2px;top:303.2px;width:37.80px;height:15.30px;background:#ffffff;border:1px solid #e6e6e8;border-bottom:1px solid #aaaaaa;border-radius:2px;box-sizing:border-box;"></div>
<div class="t" style="left:532.00px;top:303.10px;color:#3a3a3a;font-family:'Liberation Sans', sans-serif;font-size:8.5px;line-height:14px;transform:scaleX(1.0098);transform-origin:0 50%;">Subindex</div>
<div class="a" style="left:573.7px;top:303.2px;width:26.60px;height:15.30px;background:#ffffff;border:1px solid #e6e6e8;border-bottom:1px solid #aaaaaa;border-radius:2px;box-sizing:border-box;"></div>
<div class="t" style="left:607.20px;top:303.10px;color:#3a3a3a;font-family:'Liberation Sans', sans-serif;font-size:8.5px;line-height:14px;">Data</div>
<div class="a" style="left:633px;top:303.2px;width:357.80px;height:15.30px;background:linear-gradient(#eeeeef,#f2f2f3);border:1px solid #f0f0f1;border-bottom:1px solid #9a9a9a;border-radius:2px;box-sizing:border-box;"></div>
<div class="t" style="left:460.70px;top:327.00px;color:#3a3a3a;font-family:'Liberation Sans', sans-serif;font-size:8.5px;line-height:14px;transform:scaleX(1.0290);transform-origin:0 50%;">Index</div>
<div class="a" style="left:489.2px;top:327.7px;width:37.80px;height:14.80px;background:#ffffff;border:1px solid #e6e6e8;border-bottom:1px solid #aaaaaa;border-radius:2px;box-sizing:border-box;"></div>
<div class="t" style="left:532.00px;top:327.00px;color:#3a3a3a;font-family:'Liberation Sans', sans-serif;font-size:8.5px;line-height:14px;transform:scaleX(1.0098);transform-origin:0 50%;">Subindex</div>
<div class="a" style="left:573.7px;top:327.7px;width:26.60px;height:14.80px;background:#ffffff;border:1px solid #e6e6e8;border-bottom:1px solid #aaaaaa;border-radius:2px;box-sizing:border-box;"></div>
<div class="t" style="left:607.20px;top:327.00px;color:#3a3a3a;font-family:'Liberation Sans', sans-serif;font-size:8.5px;line-height:14px;">Data</div>
<div class="a" style="left:633px;top:327.7px;width:357.80px;height:14.80px;background:#ffffff;border:1px solid #e6e6e8;border-bottom:1px solid #9a9a9a;border-radius:2px;box-sizing:border-box;"></div>
<div class="t" style="left:707.50px;top:350.00px;color:#5a5a5a;font-family:'Liberation Sans', sans-serif;font-size:8.5px;line-height:14px;transform:scaleX(0.9590);transform-origin:0 50%;">信息提示:</div>
<div class="a" style="left:750.8px;top:347.5px;width:240.00px;height:14.90px;background:linear-gradient(#eeeeef,#f2f2f3);border:1px solid #f0f0f1;border-bottom:1px solid #9a9a9a;border-radius:2px;box-sizing:border-box;"></div>
<div class="t" style="left:775.20px;top:284.50px;color:#5a5a5a;font-family:'Liberation Sans', sans-serif;font-size:8.5px;line-height:14px;transform:scaleX(0.9333);transform-origin:0 50%;">显示格式</div>
<svg class="a" style="left:814.60px;top:285.50px" width="12" height="12"><circle cx="6" cy="6" r="3.90" fill="#f8f8f8" stroke="#767676" stroke-width="1"/></svg>
<div class="t" style="left:829.50px;top:284.80px;color:#3a3a3a;font-family:'Liberation Sans', sans-serif;font-size:8.5px;line-height:14px;transform:scaleX(1.0501);transform-origin:0 50%;">Binary</div>
<svg class="a" style="left:862.00px;top:285.50px" width="12" height="12"><circle cx="6" cy="6" r="4.4" fill="#0f5fc4"/><circle cx="6" cy="6" r="1.67" fill="#fff"/></svg>
<div class="t" style="left:876.80px;top:284.80px;color:#3a3a3a;font-family:'Liberation Sans', sans-serif;font-size:8.5px;line-height:14px;transform:scaleX(1.0116);transform-origin:0 50%;">Hex</div>
<svg class="a" style="left:899.30px;top:285.50px" width="12" height="12"><circle cx="6" cy="6" r="3.90" fill="#f8f8f8" stroke="#767676" stroke-width="1"/></svg>
<div class="t" style="left:914.40px;top:284.80px;color:#3a3a3a;font-family:'Liberation Sans', sans-serif;font-size:8.5px;line-height:14px;transform:scaleX(1.0488);transform-origin:0 50%;">Decimal</div>
<svg class="a" style="left:953.80px;top:285.50px" width="12" height="12"><circle cx="6" cy="6" r="3.90" fill="#f8f8f8" stroke="#767676" stroke-width="1"/></svg>
<div class="t" style="left:968.10px;top:284.80px;color:#3a3a3a;font-family:'Liberation Sans', sans-serif;font-size:8.5px;line-height:14px;transform:scaleX(1.0249);transform-origin:0 50%;">Ascii</div>
<div class="a" style="left:398.7px;top:372.3px;width:672.80px;height:133.30px;border:1px solid #e3e3e6;box-sizing:border-box;border-radius:2px;"></div>
<div class="a" style="left:402.6px;top:370.5px;width:54.00px;height:4.00px;background:#f9f9fb;"></div>
<div class="t" style="left:404.30px;top:365.50px;color:#262626;font-family:'Liberation Sans', sans-serif;font-size:9px;line-height:14px;">DataStorage</div>
<div class="t" style="left:492.50px;top:387.60px;color:#3a3a3a;font-family:'Liberation Sans', sans-serif;font-size:8.5px;line-height:14px;transform:scaleX(1.0333);transform-origin:0 50%;">CheckSum:</div>
<div class="a" style="left:542.2px;top:387.7px;width:68.10px;height:14.30px;background:linear-gradient(#eeeeef,#f2f2f3);border:1px solid #eeeeee;border-bottom:1px solid #c0c0c0;border-radius:2px;box-sizing:border-box;"></div>
<div class="t" style="left:617.10px;top:387.70px;color:#3a3a3a;font-family:'Liberation Sans', sans-serif;font-size:8.5px;line-height:14px;transform:scaleX(1.1213);transform-origin:0 50%;">VendorID:</div>
<div class="a" style="left:666.3px;top:387.2px;width:68.20px;height:14.90px;background:linear-gradient(#eeeeef,#f2f2f3);border:1px solid #eeeeee;border-bottom:1px solid #c0c0c0;border-radius:2px;box-sizing:border-box;"></div>
<div class="t" style="left:741.40px;top:385.70px;color:#3a3a3a;font-family:'Liberation Sans', sans-serif;font-size:8.5px;line-height:14px;transform:scaleX(1.0558);transform-origin:0 50%;">DeviceID:</div>
<div class="a" style="left:796.3px;top:385px;width:67.70px;height:15.00px;background:linear-gradient(#eeeeef,#f2f2f3);border:1px solid #eeeeee;border-bottom:1px solid #c0c0c0;border-radius:2px;box-sizing:border-box;"></div>
<div class="t" style="left:871.50px;top:385.70px;color:#3a3a3a;font-family:'Liberation Sans', sans-serif;font-size:8.5px;line-height:14px;transform:scaleX(1.0628);transform-origin:0 50%;">FunctionID:</div>
<div class="a" style="left:926.2px;top:384.6px;width:68.20px;height:15.40px;background:linear-gradient(#eeeeef,#f2f2f3);border:1px solid #eeeeee;border-bottom:1px solid #c0c0c0;border-radius:2px;box-sizing:border-box;"></div>
<div class="a" style="left:406.1px;top:418.3px;width:68.90px;height:20.20px;background:#e7e7e8;border:1px solid #c3c3c3;border-radius:2px;box-sizing:border-box;"></div>
<div class="t" style="left:419.30px;top:421.80px;color:#555;font-family:'Liberation Sans', sans-serif;font-size:9px;line-height:14px;">下载到设备</div>
<div class="a" style="left:406.1px;top:441.5px;width:68.90px;height:20.00px;background:#e7e7e8;border:1px solid #c3c3c3;border-radius:2px;box-sizing:border-box;"></div>
<div class="t" style="left:418.40px;top:444.70px;color:#555;font-family:'Liberation Sans', sans-serif;font-size:9px;line-height:14px;transform:scaleX(1.0200);transform-origin:0 50%;">从设备上传</div>
<div class="a" style="left:406.1px;top:464.3px;width:68.90px;height:20.30px;background:#e7e7e8;border:1px solid #c3c3c3;border-radius:2px;box-sizing:border-box;"></div>
<div class="t" style="left:432.70px;top:467.40px;color:#555;font-family:'Liberation Sans', sans-serif;font-size:9px;line-height:14px;transform:scaleX(1.0278);transform-origin:0 50%;">删除</div>
<div class="a" style="left:484.3px;top:408.1px;width:584.70px;height:96.40px;background:#a3a3a4;border:1.5px solid #4a4a4a;border-top-color:#3a3a3a;box-sizing:border-box;"></div>
<div class="a" style="left:485.3px;top:409.6px;width:582.70px;height:15.40px;background:#fff;border-bottom:1px solid #9a9a9a;box-sizing:border-box;"></div>
<div class="a" style="left:527.4px;top:409.6px;width:1.00px;height:15.40px;background:#a6a6a6;"></div>
<div class="a" style="left:604.8px;top:409.6px;width:1.00px;height:15.40px;background:#a6a6a6;"></div>
<div class="a" style="left:680.6px;top:409.6px;width:1.00px;height:15.40px;background:#a6a6a6;"></div>
<div class="a" style="left:757.4px;top:409.6px;width:1.00px;height:15.40px;background:#a6a6a6;"></div>
<div class="t" style="left:532.70px;top:410.70px;color:#262626;font-family:'Liberation Sans', sans-serif;font-size:8.5px;line-height:14px;transform:scaleX(1.0963);transform-origin:0 50%;">Index</div>
<div class="t" style="left:610.00px;top:410.80px;color:#262626;font-family:'Liberation Sans', sans-serif;font-size:8.5px;line-height:14px;transform:scaleX(1.0521);transform-origin:0 50%;">Subindex</div>
<div class="t" style="left:685.70px;top:410.80px;color:#262626;font-family:'Liberation Sans', sans-serif;font-size:8.5px;line-height:14px;transform:scaleX(1.0500);transform-origin:0 50%;">Length</div>
<div class="t" style="left:762.10px;top:410.80px;color:#262626;font-family:'Liberation Sans', sans-serif;font-size:8.5px;line-height:14px;transform:scaleX(0.9623);transform-origin:0 50%;">DS_Data</div>
<div class="a" style="left:398.7px;top:512.4px;width:672.80px;height:137.20px;border:1px solid #e3e3e6;box-sizing:border-box;border-radius:2px;"></div>
<div class="a" style="left:402.6px;top:510.4px;width:29.20px;height:4.00px;background:#f9f9fb;"></div>
<div class="t" style="left:404.30px;top:505.40px;color:#262626;font-family:'Liberation Sans', sans-serif;font-size:9px;line-height:14px;transform:scaleX(0.9376);transform-origin:0 50%;">Events</div>
<div class="a" style="left:1003px;top:519.5px;width:63.00px;height:14.60px;background:#fdfdfe;border:1px solid #e8e8ea;border-top:none;border-bottom-color:#d8d8da;border-radius:0 0 3px 3px;box-sizing:border-box;"></div>
<div class="t" style="left:1017.10px;top:518.50px;color:#333;font-family:'Liberation Sans', sans-serif;font-size:9px;line-height:14px;transform:scaleX(0.9389);transform-origin:0 50%;">清除事件</div>
<div class="a" style="left:400.6px;top:540.6px;width:668.60px;height:102.00px;background:#a3a3a4;border:1.5px solid #4a4a4a;border-top-color:#3a3a3a;box-sizing:border-box;"></div>
<div class="a" style="left:401.6px;top:542.1px;width:666.60px;height:27.30px;background:#fff;border-bottom:1px solid #9a9a9a;box-sizing:border-box;"></div>
<div class="a" style="left:443.6px;top:542.1px;width:1.00px;height:27.30px;background:#a6a6a6;"></div>
<div class="a" style="left:532.5px;top:542.1px;width:1.00px;height:27.30px;background:#a6a6a6;"></div>
<div class="a" style="left:597.2px;top:542.1px;width:1.00px;height:27.30px;background:#a6a6a6;"></div>
<div class="a" style="left:656.7px;top:542.1px;width:1.00px;height:27.30px;background:#a6a6a6;"></div>
<div class="a" style="left:836.9px;top:542.1px;width:1.00px;height:27.30px;background:#a6a6a6;"></div>
<div class="a" style="left:895.8px;top:542.1px;width:1.00px;height:27.30px;background:#a6a6a6;"></div>
<div class="a" style="left:955.5px;top:542.1px;width:1.00px;height:27.30px;background:#a6a6a6;"></div>
<div class="a" style="left:1015.5px;top:542.1px;width:1.00px;height:27.30px;background:#a6a6a6;"></div>
<div class="t" style="left:448.30px;top:548.80px;color:#262626;font-family:'Liberation Sans', sans-serif;font-size:8.5px;line-height:14px;-webkit-text-stroke:0;transform:scaleX(0.9611);transform-origin:0 50%;">时间</div>
<div class="t" style="left:537.70px;top:548.80px;color:#262626;font-family:'Liberation Sans', sans-serif;font-size:8.5px;line-height:14px;-webkit-text-stroke:0;transform:scaleX(0.9481);transform-origin:0 50%;">端口号</div>
<div class="t" style="left:602.50px;top:548.80px;color:#262626;font-family:'Liberation Sans', sans-serif;font-size:8.5px;line-height:14px;-webkit-text-stroke:0;transform:scaleX(0.9389);transform-origin:0 50%;">事件代码</div>
<div class="t" style="left:662.10px;top:548.80px;color:#262626;font-family:'Liberation Sans', sans-serif;font-size:8.5px;line-height:14px;-webkit-text-stroke:0;transform:scaleX(0.9361);transform-origin:0 50%;">事件描述</div>
<div class="t" style="left:841.80px;top:548.80px;color:#262626;font-family:'Liberation Sans', sans-serif;font-size:8.5px;line-height:14px;-webkit-text-stroke:0;transform:scaleX(0.9444);transform-origin:0 50%;">模式</div>
<div class="t" style="left:900.80px;top:548.80px;color:#262626;font-family:'Liberation Sans', sans-serif;font-size:8.5px;line-height:14px;-webkit-text-stroke:0;transform:scaleX(0.9722);transform-origin:0 50%;">类型</div>
<div class="t" style="left:961.00px;top:548.80px;color:#262626;font-family:'Liberation Sans', sans-serif;font-size:8.5px;line-height:14px;-webkit-text-stroke:0;transform:scaleX(0.9407);transform-origin:0 50%;">事件源</div>
<div class="t" style="left:1020.70px;top:542.00px;color:#262626;font-family:'Liberation Sans', sans-serif;font-size:8.5px;line-height:14px;-webkit-text-stroke:0;transform:scaleX(0.9407);transform-origin:0 50%;">事件实</div>
<div class="t" style="left:1020.70px;top:554.00px;color:#262626;font-family:'Liberation Sans', sans-serif;font-size:8.5px;line-height:14px;-webkit-text-stroke:0;">例</div>
<div class="a" style="left:0px;top:652px;width:1080.00px;height:16.00px;background:#f2f2f4;"></div>
<div class="a" style="left:0px;top:654px;width:1080.00px;height:1.00px;background:#e0e0e3;"></div>
<div class="t" style="left:1.90px;top:655.50px;color:#333;font-family:'Liberation Sans', sans-serif;font-size:9px;line-height:14px;">IO-Link Master的状态</div>
<div class="t" style="left:92.20px;top:655.50px;color:#3aa33a;font-family:'Liberation Sans', sans-serif;font-size:9px;line-height:14px;transform:scaleX(0.9417);transform-origin:0 50%;">连接成功</div>
<div class="a" style="left:130px;top:657px;width:11.00px;height:11.00px;background:#17b02c;"></div>
<div class="a" style="left:1077px;top:660px;width:1.50px;height:1.50px;background:#9a9a9e;"></div>
<div class="a" style="left:1074px;top:663px;width:1.50px;height:1.50px;background:#9a9a9e;"></div>
<div class="a" style="left:1077px;top:663px;width:1.50px;height:1.50px;background:#9a9a9e;"></div>
<div class="a" style="left:1071px;top:666px;width:1.50px;height:1.50px;background:#9a9a9e;"></div>
<div class="a" style="left:1074px;top:666px;width:1.50px;height:1.50px;background:#9a9a9e;"></div>
<div class="a" style="left:1077px;top:666px;width:1.50px;height:1.50px;background:#9a9a9e;"></div>
</body></html>
